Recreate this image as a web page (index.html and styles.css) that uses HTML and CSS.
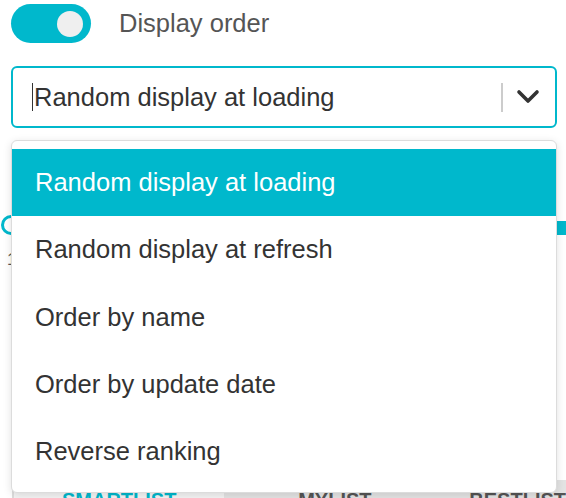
FILE: index.html
```html
<!DOCTYPE html>
<html lang="en">
<head>
<meta charset="utf-8">
<title>Display order</title>
<link rel="stylesheet" href="styles.css">
</head>
<body>
<div class="page">
  <div class="toggle-row">
    <div class="toggle"><span class="knob"></span></div>
    <span class="toggle-label">Display order</span>
  </div>

  <div class="select-wrap">
    <div class="select">
      <span class="caret"></span>
      <span class="value">Random display at loading</span>
      <span class="sep"></span>
      <svg class="chevron" width="24" height="16" viewBox="0 0 24 16">
        <polyline points="3,3 12,12 21,3" fill="none" stroke="#333" stroke-width="3.6" stroke-linecap="round" stroke-linejoin="round"/>
      </svg>
    </div>
    <ul class="menu">
      <li class="item active">Random display at loading</li>
      <li class="item">Random display at refresh</li>
      <li class="item">Order by name</li>
      <li class="item">Order by update date</li>
      <li class="item">Reverse ranking</li>
    </ul>
  </div>

  <div class="slider">
    <span class="thumb"></span>
    <span class="track"></span>
  </div>
  <div class="slider-min">1</div>

  <div class="tabs">
    <div class="tab tab-active">SMARTLIST</div>
    <div class="tab tab-mid">MYLIST</div>
    <div class="tab tab-last">BESTLIST</div>
  </div>
</div>
</body>
</html>
```

FILE: styles.css
```css
html, body {
  margin: 0;
  padding: 0;
  background: #ffffff;
  overflow: hidden;
}

body {
  font-family: "Liberation Sans", Arial, "Helvetica Neue", sans-serif;
  color: #333333;
}

.page {
  padding: 4px 9px 0 11px;
}

.toggle-row {
  display: flex;
  align-items: center;
  height: 39px;
}

.toggle {
  width: 80px;
  height: 39px;
  border-radius: 20px;
  background: #00b8cc;
  display: flex;
  align-items: center;
  justify-content: flex-end;
  padding-right: 8px;
  box-sizing: border-box;
}

.knob {
  width: 26px;
  height: 26px;
  border-radius: 50%;
  background: #efefef;
}

.toggle-label {
  margin-left: 28px;
  font-size: 25.5px;
  color: #555555;
}

.select-wrap {
  position: relative;
  margin-top: 23px;
}

.select {
  height: 62px;
  box-sizing: border-box;
  border: 2px solid #00b8cc;
  border-radius: 6px;
  display: flex;
  align-items: center;
  padding-left: 19px;
  padding-right: 15px;
}

.caret {
  width: 1px;
  height: 28px;
  background: #333333;
  margin-right: 1px;
}

.value {
  flex: 1;
  font-size: 25.5px;
  color: #333333;
}

.sep {
  width: 2px;
  height: 29px;
  background: #cccccc;
  margin-right: 13px;
}

.chevron {
  display: block;
}

.menu {
  position: absolute;
  top: 74px;
  left: 0;
  right: 0;
  margin: 0;
  padding: 8px 0 7px;
  list-style: none;
  background: #ffffff;
  border: 1px solid #dcdcdc;
  border-radius: 6px;
  box-shadow: 0 2px 8px rgba(0, 0, 0, 0.12);
  z-index: 10;
}

.item {
  height: 67.3px;
  display: flex;
  align-items: center;
  padding-left: 23px;
  font-size: 25.5px;
  color: #333333;
}

.item.active {
  background: #00b8cc;
  color: #ffffff;
}

.slider {
  display: flex;
  align-items: center;
  height: 20px;
  margin: 87px -9px 0 -10px;
}

.thumb {
  width: 20px;
  height: 20px;
  box-sizing: border-box;
  border: 3px solid #00b8cc;
  border-radius: 50%;
  background: #ffffff;
  flex: none;
}

.track {
  flex: 1;
  height: 14px;
  margin-top: 6px;
  background: #00b8cc;
}

.slider-min {
  margin: 15px 0 0 -4px;
  font-size: 17px;
  line-height: 20px;
  color: #555555;
}

.tabs {
  display: flex;
  margin: 210px -9px 0 1px;
  height: 44px;
  border-left: 2px solid #dddddd;
}

.tab {
  display: flex;
  justify-content: center;
  padding-top: 8px;
  box-sizing: border-box;
  font-size: 20px;
  font-weight: bold;
  line-height: 24px;
}

.tab-active {
  width: 219px;
  background: #f4f4f4;
  color: #00b8cc;
}

.tab-mid {
  width: 230px;
  background: #e3e3e3;
  color: #555555;
}

.tab-last {
  flex: 1;
  background: #e3e3e3;
  color: #555555;
  justify-content: flex-start;
  padding-left: 24px;
}
```
